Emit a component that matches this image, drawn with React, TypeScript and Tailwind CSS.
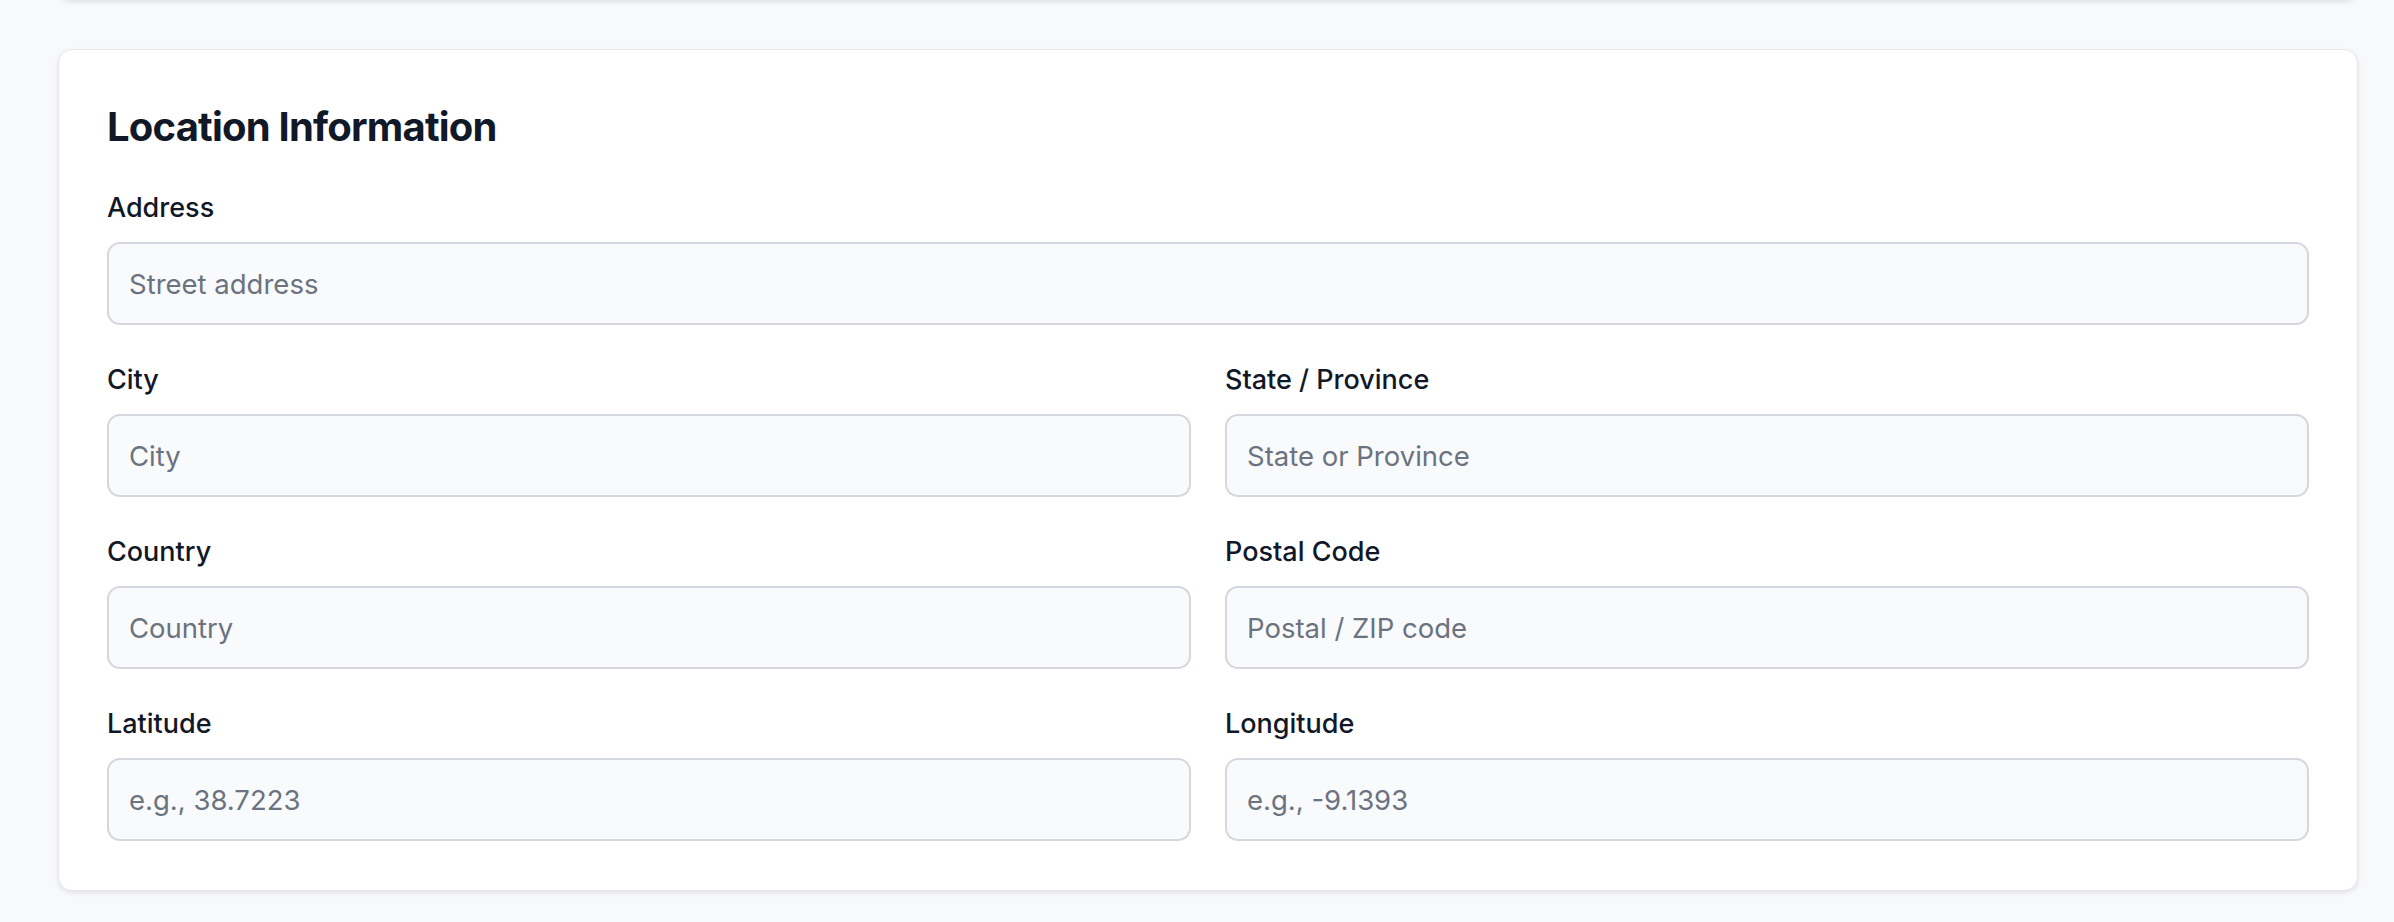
import React from "react"

type Field = {
	label: string
	placeholder: string
	wide?: boolean
}

const fields: Field[] = [
	{ label: "Address", placeholder: "Street address", wide: true },
	{ label: "City", placeholder: "City" },
	{ label: "State / Province", placeholder: "State or Province" },
	{ label: "Country", placeholder: "Country" },
	{ label: "Postal Code", placeholder: "Postal / ZIP code" },
	{ label: "Latitude", placeholder: "e.g., 38.7223" },
	{ label: "Longitude", placeholder: "e.g., -9.1393" },
]

const FormField = ({ label, placeholder, wide }: Field) => (
	<div className={wide ? "col-span-2 flex flex-col" : "flex flex-col"}>
		<label className="mb-[14px] text-[27px] font-medium leading-[41px] text-[#111827]">{label}</label>
		<input
			type="text"
			placeholder={placeholder}
			className="h-[83px] w-full rounded-[13px] border-2 border-[#d5d7de] bg-[#f9fafb] px-[20px] text-[27.5px] text-[#111827] outline-none placeholder:text-[#6b7280]"
		/>
	</div>
)

export default function App() {
	return (
		<div className="min-h-[922px] overflow-hidden bg-[#f8f9fb] pl-[58px] pr-[36px] font-['Inter',sans-serif]">
			{/* bottom edge of the previous section */}
			<div className="-mt-[20px] h-[21px] rounded-b-[14px] border border-[#e5e7eb] bg-white shadow-[0_2px_4px_rgba(0,0,0,0.08)]" />

			<section className="mt-[48px] rounded-[14px] border border-[#e5e7eb] bg-white px-[48px] pb-[49px] pt-[48px] shadow-[0_2px_5px_rgba(0,0,0,0.09)]">
				<h2 className="mb-[31px] text-[40px] font-bold leading-[58px] tracking-[-0.02em] text-[#111827]">
					Location Information
				</h2>
				<div className="grid grid-cols-2 gap-x-[34px] gap-y-[34px]">
					{fields.map((f) => (
						<FormField key={f.label} {...f} />
					))}
				</div>
			</section>
		</div>
	)
}
